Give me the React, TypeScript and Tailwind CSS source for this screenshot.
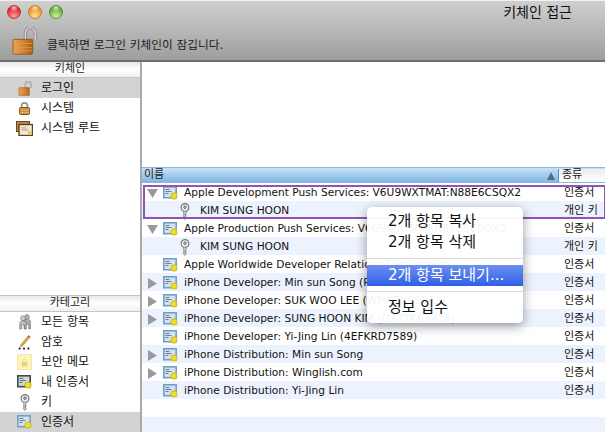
const ui = '"DejaVu Sans", "Noto Sans CJK KR", sans-serif';

function CertIcon() {
  return (
    <svg width="15" height="14" viewBox="0 0 15 14" className="shrink-0">
      <rect x="0" y="0" width="14" height="12.5" fill="#6f9fcd" />
      <rect x="1.6" y="1.6" width="10.8" height="9.3" fill="#d6e3ee" />
      <path d="M2.5 3.5h4M2.5 5.5h6M2.5 7.5h3" stroke="#6d7c8a" strokeWidth="1" />
      <circle cx="11" cy="10" r="3.2" fill="#ecdf22" stroke="#b3a51f" strokeWidth="0.6" />
    </svg>
  );
}

function MyCertIcon() {
  return (
    <svg width="15" height="14" viewBox="0 0 15 14" className="shrink-0">
      <rect x="0" y="0" width="14" height="12.5" fill="#3f4a4a" />
      <rect x="1.6" y="1.6" width="10.8" height="9.3" fill="#cfd8d8" />
      <path d="M2.5 3.5h4M2.5 5.5h6M2.5 7.5h3" stroke="#66736f" strokeWidth="1" />
      <circle cx="11" cy="10" r="3.2" fill="#ecdf22" stroke="#a89a1a" strokeWidth="0.6" />
    </svg>
  );
}

function KeyIcon() {
  return (
    <svg width="10" height="17" viewBox="0 0 10 17" className="shrink-0">
      <circle cx="5" cy="4.5" r="3.9" fill="#ececec" stroke="#6f6f6f" strokeWidth="1.1" />
      <circle cx="5" cy="4.2" r="1.2" fill="#fff" stroke="#444" strokeWidth="0.9" />
      <path d="M3.8 8.4v7l1.2 1 1-1v-1.2h-.9v-.9h.9v-1h-.9v-.9h.9V8.4" fill="#dcdcdc" stroke="#777" strokeWidth="0.8" />
    </svg>
  );
}

function OpenLock({ big }: { big?: boolean }) {
  const id = big ? 'lockA' : 'lockB';
  return (
    <svg width={big ? 25 : 14} height={big ? 28 : 15} viewBox="0 0 30 34" className="shrink-0">
      <defs>
        <linearGradient id={id} x1="0" x2="1" y1="0" y2="0">
          <stop offset="0" stopColor="#eaa957" />
          <stop offset="0.55" stopColor="#cf8029" />
          <stop offset="1" stopColor="#a55f1c" />
        </linearGradient>
      </defs>
      <path d="M16 17V7a6 6 0 0 1 12 0V16" fill="none" stroke="#8a8a8a" strokeWidth="3.8" />
      <path d="M16 17V7a6 6 0 0 1 12 0V16" fill="none" stroke="#efefef" strokeWidth="1.3" />
      <rect x="1" y="15" width="24" height="18" rx="1.5" fill={`url(#${id})`} stroke="#8a5318" />
      <path d="M2 20h22M2 25h22M2 29h22" stroke="#dd9c50" strokeWidth="1" />
    </svg>
  );
}

function ClosedLock() {
  return (
    <svg width="11" height="13" viewBox="0 0 11 13" className="shrink-0">
      <path d="M2.6 6V3.8a2.9 2.9 0 0 1 5.8 0V6" fill="none" stroke="#8f8f8f" strokeWidth="1.6" />
      <rect x="0.5" y="5.5" width="10" height="7" rx="1" fill="#d08c3e" stroke="#8a5318" />
      <path d="M1 8h9M1 10.5h9" stroke="#e8b16c" strokeWidth="1" />
    </svg>
  );
}

function RootIcon() {
  return (
    <svg width="17" height="15" viewBox="0 0 17 15" className="shrink-0">
      <rect x="0.5" y="0.5" width="13" height="10" fill="#b98a4c" stroke="#6b4a1e" />
      <rect x="3" y="3.5" width="13.5" height="11" fill="#efe8d2" stroke="#6b3f12" strokeWidth="1.4" />
      <path d="M5.5 7h5M5.5 9h7" stroke="#a99f87" />
      <circle cx="13.5" cy="11.5" r="1.5" fill="#e0cc3a" />
    </svg>
  );
}

function PeopleIcon() {
  return (
    <svg width="12" height="16" viewBox="0 0 12 16" className="shrink-0">
      <circle cx="8" cy="3" r="2.4" fill="#b5b5b5" stroke="#777" strokeWidth="0.6" />
      <path d="M5 15V8c0-2 1.2-2.8 3-2.8S11.5 6 11.5 8v7h-1.8v-4.5H7V15z" fill="#a9a9a9" stroke="#777" strokeWidth="0.6" />
      <circle cx="4" cy="4.2" r="2.4" fill="#cfcfcf" stroke="#666" strokeWidth="0.6" />
      <path d="M0.8 15V9.5c0-2 1.4-2.8 3.2-2.8s3.2.8 3.2 2.8V15H5.6v-4H2.5v4z" fill="#bdbdbd" stroke="#666" strokeWidth="0.6" />
    </svg>
  );
}

function PencilIcon() {
  return (
    <svg width="14" height="15" viewBox="0 0 14 15" className="shrink-0">
      <path d="M10.6 0.6l1.6 1.1-7.4 8.9-2.2 1.3.5-2.5z" fill="#e3b23c" stroke="#8a6a1e" strokeWidth="0.6" />
      <path d="M10.6 0.6l1.6 1.1-1 1.2-1.6-1.1z" fill="#d8564a" />
      <circle cx="1.6" cy="13.6" r="1.1" fill="#222" />
      <circle cx="6" cy="13.6" r="1.1" fill="#222" />
      <circle cx="10.4" cy="13.6" r="1.1" fill="#222" />
    </svg>
  );
}

function NoteIcon() {
  return (
    <div className="flex h-[16px] w-[15px] shrink-0 items-center justify-center border border-[#efe9b0] bg-[#fdf6b8]">
      <svg width="7" height="9" viewBox="0 0 7 9">
        <path d="M2 4V2.6a1.5 1.5 0 0 1 3 0V4" fill="none" stroke="#e6d680" strokeWidth="1" />
        <rect x="0.5" y="4" width="6" height="4.5" fill="#e6d680" />
      </svg>
    </div>
  );
}

function Triangle({ open }: { open: boolean }) {
  return open ? (
    <svg width="11" height="9" viewBox="0 0 11 9" className="shrink-0">
      <path d="M0 0h11L5.5 9z" fill="#9a9a9a" />
    </svg>
  ) : (
    <svg width="9" height="11" viewBox="0 0 9 11" className="shrink-0">
      <path d="M0 0v11l9-5.5z" fill="#9a9a9a" />
    </svg>
  );
}

function SideHeader({ label }: { label: string }) {
  return (
    <div className="flex h-[16px] items-center justify-center border-b border-[#c4c4c4] bg-gradient-to-b from-[#e8e8e8] via-[#ffffff] to-[#f0f0f0] text-[11px] text-[#222]">
      {label}
    </div>
  );
}

function SideRow({ icon, label, selected }: { icon: React.ReactNode; label: string; selected?: boolean }) {
  return (
    <div className={`flex h-[20px] items-center text-[12px] text-[#111] ${selected ? 'bg-[#d3d3d3]' : ''}`}>
      <div className="flex w-[41px] shrink-0 justify-center pl-[8px]">{icon}</div>
      {label}
    </div>
  );
}

type Row = { name: string; kind: string; toggle?: 'open' | 'closed'; child?: boolean };

const rows: Row[] = [
  { name: 'Apple Development Push Services: V6U9WXTMAT:N88E6CSQX2', kind: '인증서', toggle: 'open' },
  { name: 'KIM SUNG HOON', kind: '개인 키', child: true },
  { name: 'Apple Production Push Services: V6U9WXTMAT:N88E6CSQX2', kind: '인증서', toggle: 'open' },
  { name: 'KIM SUNG HOON', kind: '개인 키', child: true },
  { name: 'Apple Worldwide Developer Relations Certification', kind: '인증서' },
  { name: 'iPhone Developer: Min sun Song (RN8D9PY8X3)', kind: '인증서', toggle: 'closed' },
  { name: 'iPhone Developer: SUK WOO LEE (WMK7X9S3A2)', kind: '인증서', toggle: 'closed' },
  { name: 'iPhone Developer: SUNG HOON KIM (DX7TK6X4T8)', kind: '인증서', toggle: 'closed' },
  { name: 'iPhone Developer: Yi-Jing Lin (4EFKRD7589)', kind: '인증서' },
  { name: 'iPhone Distribution: Min sun Song', kind: '인증서', toggle: 'closed' },
  { name: 'iPhone Distribution: Winglish.com', kind: '인증서', toggle: 'closed' },
  { name: 'iPhone Distribution: Yi-Jing Lin', kind: '인증서' },
  { name: '', kind: '' },
  { name: '', kind: '' },
];

function MenuItem({ label, active }: { label: string; active?: boolean }) {
  return (
    <div className={`flex h-[21px] items-center pl-[21px] text-[15px] ${active ? 'bg-gradient-to-b from-[#6c8ff0] to-[#2f5fe6] text-white' : 'text-[#111]'}`}>
      {label}
    </div>
  );
}

export default function App() {
  return (
    <div className="flex h-[432px] w-[605px] flex-col overflow-hidden bg-white" style={{ fontFamily: ui }}>
      <div className="h-[62px] shrink-0 border-t border-b-2 border-t-[#f2f2f2] border-b-[#6e6e6e] bg-gradient-to-b from-[#d0d0d0] to-[#9e9e9e] pt-[4px]">
        <div className="flex items-center justify-between pr-[33px]">
          <div className="flex gap-[7px] pl-[7px]">
            <div className="h-[14px] w-[14px] rounded-full border border-[#b23a3a] bg-[radial-gradient(circle_at_50%_12%,rgba(255,255,255,0.75),transparent_35%),radial-gradient(circle_at_50%_85%,#ff9c9c,#dc1f2c_75%)]" />
            <div className="h-[14px] w-[14px] rounded-full border border-[#b8812a] bg-[radial-gradient(circle_at_50%_12%,rgba(255,255,255,0.75),transparent_35%),radial-gradient(circle_at_50%_85%,#ffe09a,#ee8d1c_75%)]" />
            <div className="h-[14px] w-[14px] rounded-full border border-[#5e8f34] bg-[radial-gradient(circle_at_50%_12%,rgba(255,255,255,0.75),transparent_35%),radial-gradient(circle_at_50%_85%,#cff29a,#56a52c_75%)]" />
          </div>
          <div className="text-[14px] leading-[14px] text-[#111]">키체인 접근</div>
        </div>
        <div className="flex items-start gap-[10px] pl-[12px] pt-[8px]">
          <OpenLock big />
          <span className="pt-[9px] text-[11.7px] leading-[18px] text-[#1c1c1c]">클릭하면 로그인 키체인이 잠깁니다.</span>
        </div>
      </div>
      <div className="relative flex min-h-0 flex-1">
        <div className="flex w-[142px] shrink-0 flex-col justify-between border-r-2 border-[#a9a9a9]">
          <div>
            <SideHeader label="키체인" />
            <SideRow icon={<OpenLock />} label="로그인" selected />
            <SideRow icon={<ClosedLock />} label="시스템" />
            <SideRow icon={<RootIcon />} label="시스템 루트" />
          </div>
          <div>
            <div className="border-t border-[#c4c4c4]">
              <SideHeader label="카테고리" />
            </div>
            <SideRow icon={<PeopleIcon />} label="모든 항목" />
            <SideRow icon={<PencilIcon />} label="암호" />
            <SideRow icon={<NoteIcon />} label="보안 메모" />
            <SideRow icon={<MyCertIcon />} label="내 인증서" />
            <SideRow icon={<KeyIcon />} label="키" />
            <SideRow icon={<CertIcon />} label="인증서" selected />
          </div>
        </div>
        <div className="flex min-w-0 flex-1 flex-col">
          <div className="h-[105px] shrink-0 bg-white" />
          <div className="flex h-[16px] shrink-0 border-y border-[#8fb4d6] bg-gradient-to-b from-[#c9e1f5] to-[#7fb8e6] pt-[1px] text-[11px] text-[#222]">
            <div className="flex w-[417px] items-center justify-between border-r border-[#5f8fb8] pl-[2px] pr-[3px]">
              <span>이름</span>
              <svg width="8" height="8" viewBox="0 0 8 8">
                <path d="M4 0L8 8H0z" fill="#4e6f8c" />
              </svg>
            </div>
            <div className="flex flex-1 items-center bg-gradient-to-b from-[#ececec] to-[#ffffff] pl-[3px]">종류</div>
          </div>
          <div className="min-h-0 flex-1 overflow-hidden">
            {rows.map((row, i) => (
              <div key={i} className={`flex h-[18px] items-center pt-[2px] text-[10.62px] text-[#111] ${i % 2 === 1 ? 'bg-[#edf3fe]' : 'bg-white'}`}>
                <div className="flex w-[417px] shrink-0 items-center overflow-hidden whitespace-nowrap">
                  {row.child ? (
                    <>
                      <div className="flex w-[48px] shrink-0 justify-end"><KeyIcon /></div>
                      <span className="pl-[10px]">{row.name}</span>
                    </>
                  ) : row.name ? (
                    <>
                      <div className="flex w-[21px] shrink-0 justify-center">
                        {row.toggle && <Triangle open={row.toggle === 'open'} />}
                      </div>
                      <CertIcon />
                      <span className="pl-[6px]">{row.name}</span>
                    </>
                  ) : null}
                </div>
                <div className="whitespace-nowrap pl-[5px] text-[11px]">{row.kind}</div>
              </div>
            ))}
          </div>
        </div>
        <div className="absolute left-[143px] top-[123px] h-[34px] w-[463px] border-2 border-[#8e55b4]" />
        <div className="absolute left-[367px] top-[145px] h-[116px] w-[156px] rounded-[5px] bg-white/95 pt-[4px] shadow-[0_3px_12px_rgba(0,0,0,0.4)]">
          <MenuItem label="2개 항목 복사" />
          <MenuItem label="2개 항목 삭제" />
          <div className="mb-[6px] mt-[5px] h-px bg-[#dcdcdc]" />
          <MenuItem label="2개 항목 보내기..." active />
          <div className="my-[5px] h-px bg-[#dcdcdc]" />
          <MenuItem label="정보 입수" />
        </div>
      </div>
    </div>
  );
}
